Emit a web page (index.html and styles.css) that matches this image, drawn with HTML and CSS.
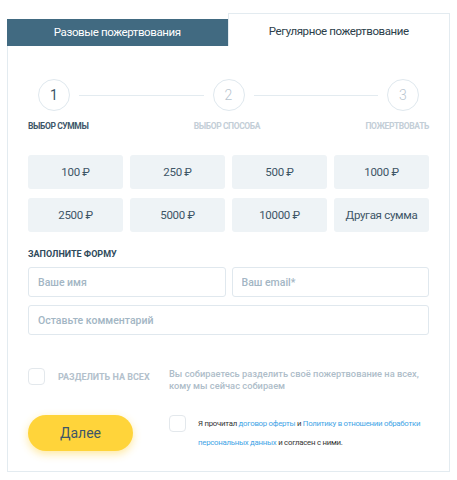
FILE: index.html
```html
<!DOCTYPE html>
<html lang="ru">
<head>
<meta charset="UTF-8">
<meta name="viewport" content="width=device-width, initial-scale=1.0">
<title>Пожертвование</title>
<link rel="stylesheet" href="styles.css">
</head>
<body>

  <div class="donate">
    <div class="tabs">
      <div class="tab">Разовые пожертвования</div>
      <div class="tab tab-active">Регулярное пожертвование</div>
    </div>

    <div class="panel">
      <div class="steps">
        <span class="circle">1</span>
        <span class="line"></span>
        <span class="circle">2</span>
        <span class="line"></span>
        <span class="circle">3</span>
      </div>
      <div class="step-labels">
        <span class="step-label current">Выбор суммы</span>
        <span class="step-label">Выбор способа</span>
        <span class="step-label">Пожертвовать</span>
      </div>

      <div class="amounts">
        <button class="amount">100 ₽</button>
        <button class="amount">250 ₽</button>
        <button class="amount">500 ₽</button>
        <button class="amount">1000 ₽</button>
        <button class="amount">2500 ₽</button>
        <button class="amount">5000 ₽</button>
        <button class="amount">10000 ₽</button>
        <button class="amount">Другая сумма</button>
      </div>

      <div class="form-title">Заполните форму</div>
      <div class="fields">
        <input class="field" type="text" placeholder="Ваше имя">
        <input class="field" type="text" placeholder="Ваш email*">
        <input class="field field-wide" type="text" placeholder="Оставьте комментарий">
      </div>

      <div class="split">
        <label class="split-check">
          <span class="box"></span>
          <span class="split-label">Разделить на всех</span>
        </label>
        <p class="split-note">Вы собираетесь разделить своё пожертвование на всех, кому мы сейчас собираем</p>
      </div>

      <div class="submit-row">
        <button class="next">Далее</button>
        <div class="agree">
          <span class="box"></span>
          <p class="agree-text">Я прочитал <a href="#">договор оферты</a> и <a href="#">Политику в отношении обработки<br>персональных данных</a> и согласен с ними.</p>
        </div>
      </div>
    </div>
  </div>

</body>
</html>
```

FILE: styles.css
```css
body {
  margin: 0;
  font-family: Roboto, "Noto Sans", sans-serif;
  background: #fff;
}

.donate {
  padding: 13px 7px 0;
}

/* Вкладки */
.tabs {
  display: flex;
  align-items: flex-end;
}

.tab {
  flex: 1;
  height: 27px;
  line-height: 27px;
  text-align: center;
  font-size: 11.5px;
  letter-spacing: -0.4px;
  color: #fff;
  background-color: #416a81;
}

.tab-active {
  height: 32px;
  line-height: 35px;
  color: #2c3e4a;
  background-color: #fff;
  border: 1px solid #e3ebf0;
  border-bottom: none;
}

.panel {
  border: 1px solid #e3ebf0;
  border-top: none;
  padding: 33px 20px 19px;
}

/* Шаги */
.steps {
  display: flex;
  align-items: center;
  padding: 0 10px;
}

.circle {
  width: 30px;
  height: 30px;
  border: 1px solid #dfe8ee;
  border-radius: 50%;
  display: flex;
  align-items: center;
  justify-content: center;
  font-size: 14px;
  font-weight: 300;
  color: #b8c5cf;
}

.circle:first-child {
  color: #3d5668;
  font-weight: 400;
}

.line {
  flex: 1;
  height: 1px;
  margin: 0 9px;
  background-color: #e3ebf0;
}

.step-labels {
  display: flex;
  justify-content: space-between;
  margin-top: 10px;
}

.step-label {
  font-size: 8.5px;
  font-weight: 700;
  letter-spacing: -0.4px;
  text-transform: uppercase;
  color: #c3ced7;
}

.step-label.current {
  color: #3d5668;
}

/* Суммы */
.amounts {
  display: grid;
  grid-template-columns: repeat(4, 1fr);
  gap: 9px 7px;
  margin-top: 24px;
}

.amount {
  height: 34px;
  border: none;
  border-radius: 3px;
  background-color: #eef3f6;
  font-family: inherit;
  font-size: 11.5px;
  letter-spacing: -0.3px;
  color: #3d5566;
}

/* Форма */
.form-title {
  margin-top: 17px;
  font-size: 9px;
  font-weight: 700;
  text-transform: uppercase;
  color: #2f4a5b;
}

.fields {
  display: grid;
  grid-template-columns: 1fr 1fr;
  gap: 8px 6px;
  margin-top: 8px;
}

.field {
  height: 30px;
  box-sizing: border-box;
  border: 1px solid #e0e8ee;
  border-radius: 3px;
  padding: 0 9px;
  font-family: inherit;
  font-size: 10.5px;
  font-weight: 500;
}

.field::placeholder {
  color: #a3b6c4;
}

.field-wide {
  grid-column: 1 / 3;
}

.box {
  flex-shrink: 0;
  width: 15px;
  height: 15px;
  border: 1px solid #e3e8ec;
  border-radius: 4px;
}

/* Разделить на всех */
.split {
  display: flex;
  align-items: flex-start;
  margin-top: 33px;
}

.split-check {
  display: flex;
  align-items: center;
  width: 141px;
  flex-shrink: 0;
}

.split-label {
  margin-left: 13px;
  font-size: 9px;
  font-weight: 700;
  text-transform: uppercase;
  color: #b3c1cc;
}

.split-note {
  margin: 0;
  width: 250px;
  font-size: 9.3px;
  font-weight: 500;
  line-height: 12px;
  color: #aebdc9;
}

/* Кнопка и согласие */
.submit-row {
  display: flex;
  align-items: flex-start;
  margin-top: 23px;
}

.next {
  flex-shrink: 0;
  width: 105px;
  height: 36px;
  border: none;
  border-radius: 18px;
  background-color: #ffd43a;
  box-shadow: 0 3px 8px rgba(255, 204, 40, 0.45);
  font-family: inherit;
  font-size: 14px;
  color: #3d5668;
}

.agree {
  display: flex;
  align-items: flex-start;
  margin-left: 36px;
}

.agree-text {
  margin: -1px 0 0 12px;
  font-size: 7.8px;
  letter-spacing: -0.25px;
  line-height: 19px;
  white-space: nowrap;
  color: #333;
}

.agree-text a {
  color: #3fa4e6;
  text-decoration: none;
}
```
